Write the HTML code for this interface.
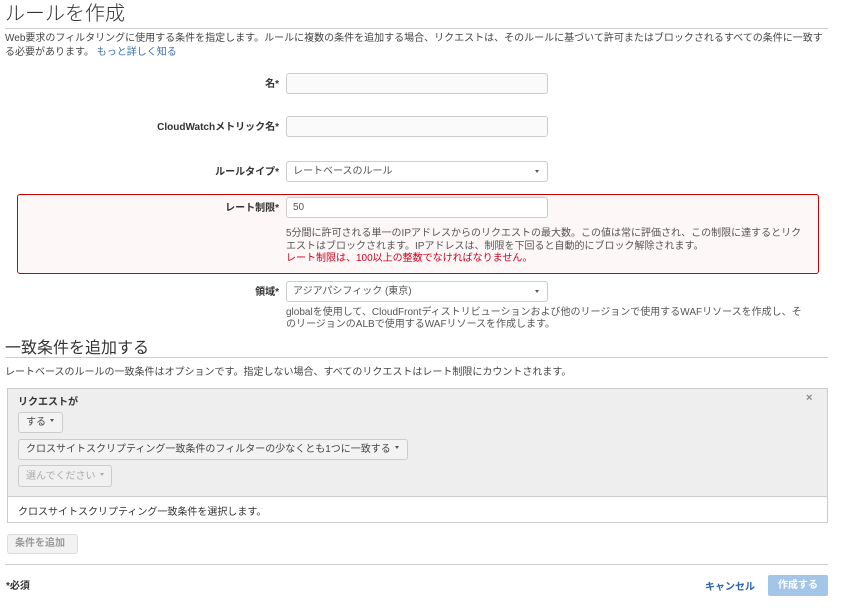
<!DOCTYPE html>
<html><head><meta charset="utf-8"><style>
*{box-sizing:border-box;margin:0;padding:0}
body{width:851px;height:613px;background:#fff;font-family:"Liberation Sans","Noto Sans CJK JP",sans-serif;font-size:10px;color:#444;position:relative;overflow:hidden}
.a{position:absolute;white-space:nowrap}
.lbl{position:absolute;right:572px;font-weight:bold;color:#333;font-size:10px}
.inp{position:absolute;left:286px;width:262px;height:21px;border:1px solid #ccc;border-radius:3px;background:#fafafa;padding-left:6px;line-height:20px;font-size:10px;color:#555}
.sel::after{content:"";position:absolute;right:8px;top:8px;border:2.5px solid transparent;border-top:3px solid #555}
.btn{position:absolute;border:1px solid #ccc;border-radius:3px;background:#f3f3f3;padding-left:7px;line-height:20px;font-size:10px;color:#444}
.caret{display:inline-block;border:2.5px solid transparent;border-top:3px solid #555;margin-left:4px;vertical-align:1px}
</style></head><body>
<div class="a" style="left:5px;top:-3px;font-size:20px;color:#333;font-weight:300">ルールを作成</div>
<div class="a" style="left:5px;top:28px;width:823px;height:1px;background:#ccc"></div>
<div class="a" style="left:5px;top:32px;line-height:14px;white-space:normal;width:825px">Web要求のフィルタリングに使用する条件を指定します。ルールに複数の条件を追加する場合、リクエストは、そのルールに基づいて許可またはブロックされるすべての条件に一致する必要があります。 <span style="color:#3a6fb0">もっと詳しく知る</span></div>
<div class="lbl" style="top:75px">名*</div>
<div class="inp" style="top:73px"></div>
<div class="lbl" style="top:118px">CloudWatchメトリック名*</div>
<div class="inp" style="top:116px"></div>
<div class="lbl" style="top:163px">ルールタイプ*</div>
<div class="inp sel" style="top:161px;background:#fff">レートベースのルール</div>
<div class="a" style="left:17px;top:194px;width:802px;height:80px;border:1px solid #c00;border-radius:3px;background:#fdf7f7"></div>
<div class="lbl" style="top:199px">レート制限*</div>
<div class="inp" style="top:197px;background:#fff">50</div>
<div class="a" style="left:286px;top:228px;line-height:12.5px;color:#555">5分間に許可される単一のIPアドレスからのリクエストの最大数。この値は常に評価され、この制限に達するとリク<br>エストはブロックされます。IPアドレスは、制限を下回ると自動的にブロック解除されます。<br><span style="color:#d0021b">レート制限は、100以上の整数でなければなりません。</span></div>
<div class="lbl" style="top:283px">領域*</div>
<div class="inp sel" style="top:281px;background:#fff">アジアパシフィック (東京)</div>
<div class="a" style="left:286px;top:307px;line-height:12px;color:#555">globalを使用して、CloudFrontディストリビューションおよび他のリージョンで使用するWAFリソースを作成し、そ<br>のリージョンのALBで使用するWAFリソースを作成します。</div>
<div class="a" style="left:5px;top:334px;font-size:16px;color:#333">一致条件を追加する</div>
<div class="a" style="left:5px;top:357px;width:823px;height:1px;background:#ccc"></div>
<div class="a" style="left:5px;top:363px">レートベースのルールの一致条件はオプションです。指定しない場合、すべてのリクエストはレート制限にカウントされます。</div>
<div class="a" style="left:7px;top:388px;width:821px;height:135px;border:1px solid #ccc;background:#fff"></div>
<div class="a" style="left:8px;top:389px;width:819px;height:108px;background:#eee;border-bottom:1px solid #ccc"></div>
<div class="a" style="left:18px;top:393px;font-weight:bold;color:#333">リクエストが</div>
<div class="a" style="left:806px;top:392px;font-weight:bold;color:#888;font-size:11px">×</div>
<div class="btn" style="left:18px;top:412px;width:45px;height:21px">する<span class="caret"></span></div>
<div class="btn" style="left:18px;top:439px;width:390px;height:21px">クロスサイトスクリプティング一致条件のフィルターの少なくとも1つに一致する<span class="caret"></span></div>
<div class="btn" style="left:18px;top:465px;width:94px;height:22px;color:#aaa;background:#f0f0f0;line-height:21px">選んでください<span class="caret" style="border-top-color:#aaa"></span></div>
<div class="a" style="left:18px;top:503px;color:#333">クロスサイトスクリプティング一致条件を選択します。</div>
<div class="btn" style="left:7px;top:534px;width:71px;height:20px;color:#999;font-weight:bold;background:#f2f2f2;border-color:#ddd;line-height:18px">条件を追加</div>
<div class="a" style="left:5px;top:564px;width:823px;height:1px;background:#ccc"></div>
<div class="a" style="left:6px;top:577px;font-weight:bold;color:#333">*必須</div>
<div class="a" style="left:705px;top:578px;font-weight:bold;color:#2a64b0">キャンセル</div>
<div class="a" style="left:768px;top:575px;width:60px;height:21px;background:#a3c5e8;border-radius:2px;color:#fff;font-weight:bold;text-align:center;line-height:21px">作成する</div>
</body></html>
